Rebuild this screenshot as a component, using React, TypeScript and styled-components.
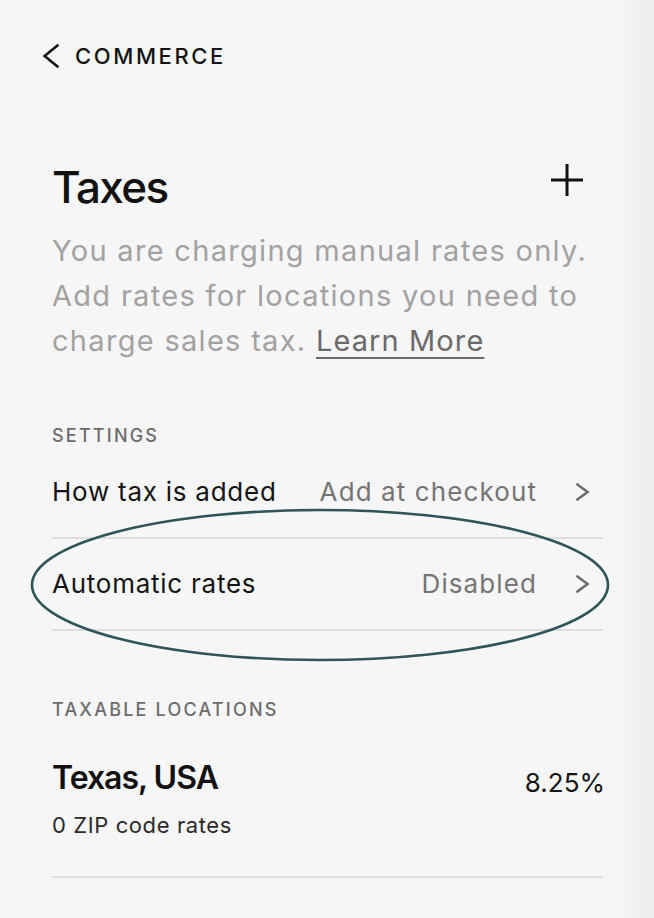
import React from "react";
import styled, { createGlobalStyle } from "styled-components";

const GlobalStyle = createGlobalStyle`
  html, body {
    margin: 0;
    padding: 0;
  }
  body {
    background: linear-gradient(to right, #f6f6f6 calc(100% - 40px), #ededed 100%);
    font-family: Inter, "Noto Sans", "Liberation Sans", sans-serif;
    color: #121212;
    -webkit-font-smoothing: antialiased;
  }
  * { box-sizing: border-box; }
`;

const Page = styled.div`
  width: 654px;
  min-height: 918px;
  padding: 43px 51px 0 52px;
  display: flex;
  flex-direction: column;
`;

const BackLink = styled.div`
  display: flex;
  align-items: center;
  gap: 15px;
  margin-left: -10px;
  height: 26px;
`;

const BackText = styled.span`
  font-size: 22px;
  line-height: 26px;
  font-weight: 500;
  letter-spacing: 2.6px;
  color: #141414;
`;

const TitleRow = styled.div`
  display: flex;
  align-items: flex-start;
  justify-content: space-between;
  margin-top: 92px;
`;

const Title = styled.h1`
  margin: 0;
  font-size: 44px;
  line-height: 52px;
  font-weight: 500;
  letter-spacing: -1.6px;
  color: #121212;
`;

const PlusButton = styled.div`
  width: 34px;
  height: 34px;
  margin-top: 2px;
  margin-right: 19px;
  display: flex;
  align-items: center;
  justify-content: center;
`;

const Intro = styled.p`
  margin: 15px 0 0;
  font-size: 29px;
  line-height: 45px;
  font-weight: 400;
  color: #a2a2a2;
  letter-spacing: 1.3px;
`;

const LearnMore = styled.a`
  color: #6a6a6a;
  letter-spacing: 1.1px;
  text-decoration: underline;
  text-decoration-thickness: 2px;
  text-underline-offset: 6px;
  text-decoration-color: #6a6a6a;
`;

const SectionLabel = styled.div<{ $top: number }>`
  margin-top: ${(p) => p.$top}px;
  font-size: 18px;
  line-height: 22px;
  font-weight: 500;
  letter-spacing: 2.2px;
  color: #6c6c6c;
  text-transform: uppercase;
`;

const RowList = styled.div`
  position: relative;
  display: flex;
  flex-direction: column;
`;

const SettingRow = styled.div`
  display: flex;
  align-items: center;
  height: 92px;
  border-bottom: 2px solid #dedede;
`;

const RowLabel = styled.span`
  font-size: 26px;
  line-height: 32px;
  letter-spacing: 0.75px;
  color: #141414;
  flex: 1;
`;

const RowValue = styled.span`
  font-size: 26px;
  line-height: 32px;
  letter-spacing: 1.1px;
  color: #747474;
`;

const ChevronBox = styled.span`
  width: 66px;
  display: flex;
  justify-content: flex-start;
  padding-left: 38px;
`;

const Highlight = styled.svg`
  position: absolute;
  left: -22px;
  top: 60px;
  pointer-events: none;
  overflow: visible;
`;

const LocationRow = styled.div`
  display: flex;
  justify-content: space-between;
  align-items: flex-start;
  margin-top: 38px;
  padding-bottom: 37px;
  border-bottom: 2px solid #dedede;
`;

const LocationInfo = styled.div`
  display: flex;
  flex-direction: column;
  gap: 14px;
`;

const LocationName = styled.span`
  font-size: 32px;
  line-height: 38px;
  font-weight: 600;
  letter-spacing: -1px;
  color: #121212;
`;

const LocationSub = styled.span`
  font-size: 22px;
  line-height: 28px;
  letter-spacing: 0.6px;
  color: #2a2a2a;
`;

const Rate = styled.span`
  margin-top: 8px;
  margin-right: -2px;
  font-size: 26px;
  line-height: 32px;
  color: #141414;
`;

const Chevron = ({ dir, color, w, h, sw }: { dir: "left" | "right"; color: string; w: number; h: number; sw: number }) => (
  <svg width={w} height={h} viewBox={`0 0 ${w} ${h}`} fill="none">
    <polyline
      points={
        dir === "left"
          ? `${w - sw},${sw} ${sw},${h / 2} ${w - sw},${h - sw}`
          : `${sw},${sw} ${w - sw},${h / 2} ${sw},${h - sw}`
      }
      stroke={color}
      strokeWidth={sw}
      strokeLinecap="square"
      strokeLinejoin="miter"
    />
  </svg>
);

export default function App() {
  return (
    <>
      <GlobalStyle />
      <Page>
        <BackLink>
          <Chevron dir="left" color="#141414" w={18} h={26} sw={2.6} />
          <BackText>COMMERCE</BackText>
        </BackLink>

        <TitleRow>
          <Title>Taxes</Title>
          <PlusButton>
            <svg width="34" height="34" viewBox="0 0 34 34">
              <line x1="17" y1="1" x2="17" y2="33" stroke="#121212" strokeWidth="3" />
              <line x1="1" y1="17" x2="33" y2="17" stroke="#121212" strokeWidth="3" />
            </svg>
          </PlusButton>
        </TitleRow>

        <Intro>
          You are charging manual rates only. Add rates for locations you need to charge sales tax.{" "}
          <LearnMore>Learn More</LearnMore>
        </Intro>

        <SectionLabel $top={62}>Settings</SectionLabel>
        <RowList>
          <SettingRow>
            <RowLabel>How tax is added</RowLabel>
            <RowValue>Add at checkout</RowValue>
            <ChevronBox>
              <Chevron dir="right" color="#6a6a6a" w={15} h={20} sw={2.4} />
            </ChevronBox>
          </SettingRow>
          <SettingRow>
            <RowLabel>Automatic rates</RowLabel>
            <RowValue>Disabled</RowValue>
            <ChevronBox>
              <Chevron dir="right" color="#6a6a6a" w={15} h={20} sw={2.4} />
            </ChevronBox>
          </SettingRow>
          <Highlight width="580" height="156" viewBox="0 0 580 156">
            <ellipse cx="290" cy="78" rx="288" ry="75" fill="none" stroke="#2e5557" strokeWidth="2.6" />
          </Highlight>
        </RowList>

        <SectionLabel $top={68}>Taxable Locations</SectionLabel>
        <LocationRow>
          <LocationInfo>
            <LocationName>Texas, USA</LocationName>
            <LocationSub>0 ZIP code rates</LocationSub>
          </LocationInfo>
          <Rate>8.25%</Rate>
        </LocationRow>
      </Page>
    </>
  );
}
